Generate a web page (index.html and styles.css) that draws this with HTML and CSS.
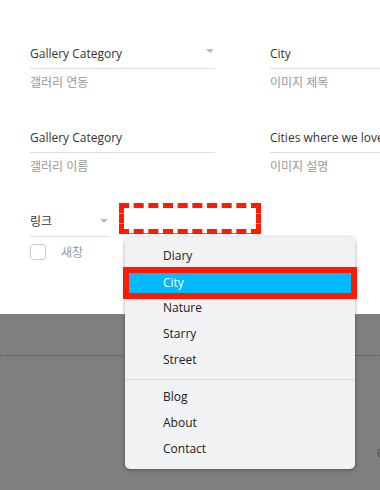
FILE: index.html
```html
<!DOCTYPE html>
<html lang="ko">
<head>
    <meta charset="UTF-8">
    <meta name="viewport" content="width=device-width, initial-scale=1.0">
    <title>갤러리 설정</title>
    <link rel="stylesheet" href="styles.css">
</head>
<body>
    <div class="panel">
        <div class="grid">
            <div class="field">
                <div class="select">Gallery Category <span class="caret"></span></div>
                <div class="hint">갤러리 연동</div>
            </div>
            <div class="field">
                <div class="select">City</div>
                <div class="hint">이미지 제목</div>
            </div>
            <div class="field">
                <div class="select">Gallery Category</div>
                <div class="hint">갤러리 이름</div>
            </div>
            <div class="field">
                <div class="select nowrap">Cities where we love</div>
                <div class="hint">이미지 설명</div>
            </div>
        </div>

        <div class="link-row">
            <div class="link-field">
                <div class="select">링크 <span class="caret low"></span></div>
                <label class="check-row"><span class="checkbox"></span>새창</label>
            </div>
            <div class="url-field">
                <ul class="menu">
                    <li>Diary</li>
                    <li class="active">City</li>
                    <li>Nature</li>
                    <li>Starry</li>
                    <li>Street</li>
                    <li class="sep"></li>
                    <li>Blog</li>
                    <li>About</li>
                    <li>Contact</li>
                </ul>
            </div>
        </div>
    </div>

    <div class="footer">
        <p class="copy">© 2024 Gallery</p>
    </div>
</body>
</html>
```

FILE: styles.css
```css
html, body { margin: 0; padding: 0; }
body { font-family: "Open Sans", "Noto Sans CJK KR", sans-serif; font-size: 12px; color: #333; background: #7f7f7f; width: 380px; height: 490px; overflow: hidden; }
.panel { background: #fff; height: 314px; box-sizing: border-box; padding: 38px 0 0 30px; }
.grid { display: grid; grid-template-columns: 185px 185px; column-gap: 55px; row-gap: 25px; }
.select { height: 30px; border-bottom: 1px solid #ddd; display: flex; align-items: center; justify-content: space-between; white-space: nowrap; }
.caret { width: 0; height: 0; border-left: 4px solid transparent; border-right: 4px solid transparent; border-top: 4px solid #bbb; margin: 0 1px 4px 0; }
.caret.low { margin: 0 2px 0 0; }
.hint { line-height: 28px; color: #999; }

.link-row { display: flex; gap: 10px; margin-top: 25px; }
.link-field { width: 80px; }
.check-row { display: flex; align-items: center; height: 30px; color: #999; }
.checkbox { width: 14px; height: 14px; border: 1px solid #ccc; border-radius: 3px; margin-right: 15px; }
.url-field { width: 140px; height: 28px; margin-top: -1px; border-bottom: 1px solid #2aa6d6; position: relative; }
.url-field::after { content: ""; position: absolute; top: -2px; left: -1px; right: -1px; bottom: -1px; border: 5px dashed #ff1a00; }

.menu { position: absolute; left: 5px; top: calc(100% + 4px); z-index: 2; width: 230px; margin: 0; padding: 6px 0 7px; list-style: none; background: #f1f2f4; border-radius: 5px; box-shadow: 0 1px 4px rgba(0, 0, 0, 0.35); color: #222; }
.menu li { height: 26px; line-height: 26px; padding-left: 38px; }
.menu li.active { height: 20px; line-height: 20px; margin: 4px 4px 2px; padding-left: 34px; background: #00baff; color: #fff; outline: 6px solid #ff1a00; }
.menu li.sep { height: 1px; padding: 0; margin: 6px 0 4px; background: #d8d9dc; }

.footer { margin-top: 41px; border-top: 1px dotted #1e6b7c; }
.copy { margin: 89px 0 0 377px; white-space: nowrap; color: #3a3a3a; }
```
